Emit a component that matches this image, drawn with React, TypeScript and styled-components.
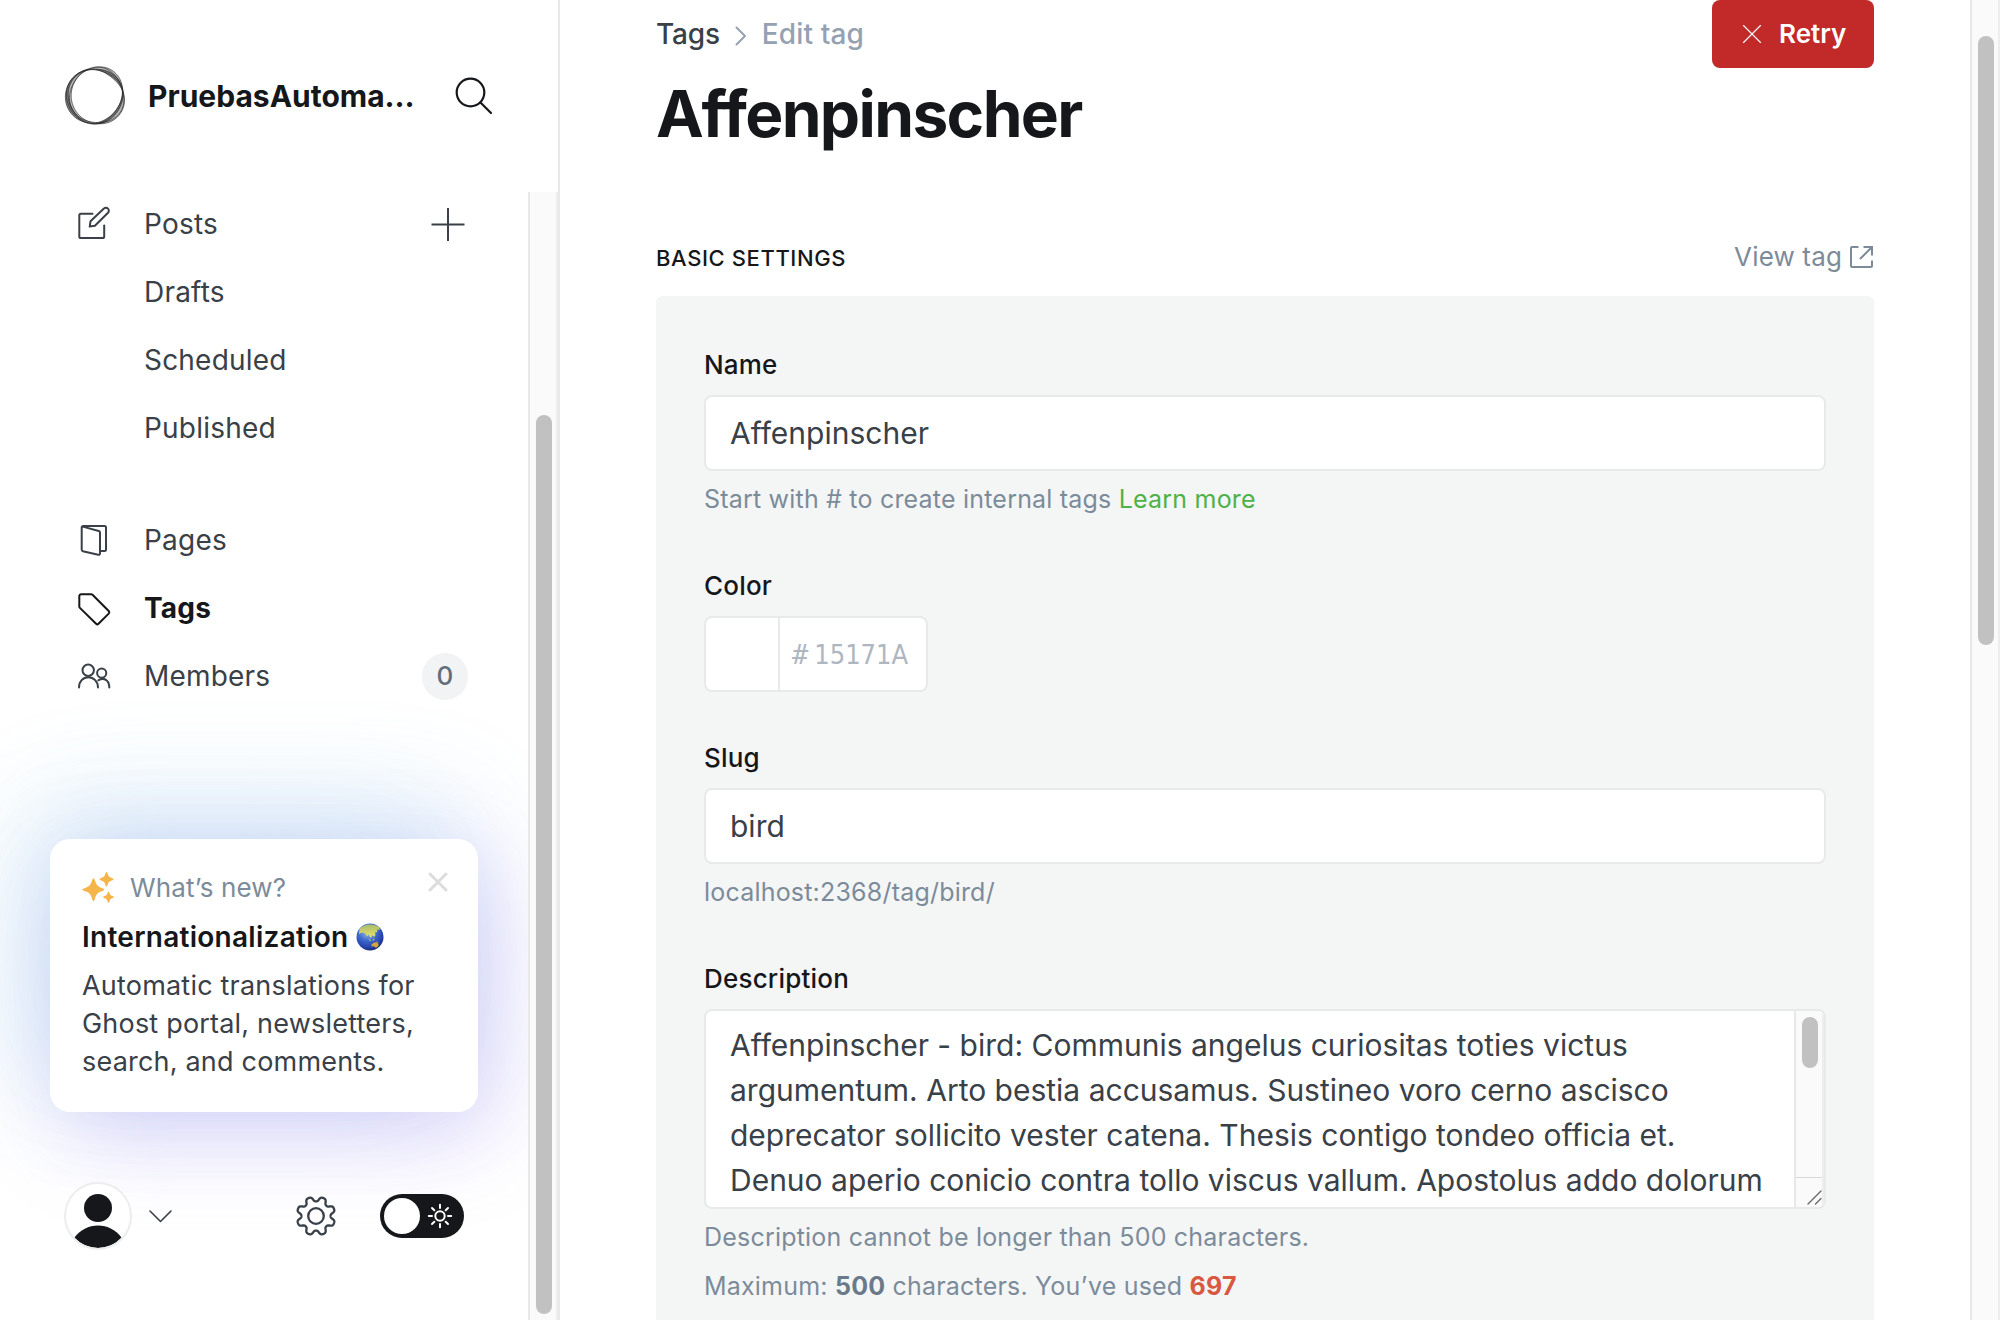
import React from 'react';
import styled, { createGlobalStyle, css } from 'styled-components';

const color = {
  ink: '#15171a',
  text: '#394047',
  mid: '#7c8b9a',
  soft: '#95a1b1',
  line: '#e8eaea',
  panel: '#f4f6f6',
  track: '#fafafa',
  trackLine: '#e8e8e8',
  thumb: '#c1c1c1',
  red: '#c22929',
  alert: '#d8593f',
  green: '#50b146',
};

const GlobalStyle = createGlobalStyle`
  *, *::before, *::after { box-sizing: border-box; }
  body {
    margin: 0;
    overflow: hidden;
    background: #fff;
    color: ${color.text};
    font-family: Inter, "Liberation Sans", sans-serif;
    -webkit-font-smoothing: antialiased;
  }
  h1, h2, h3, p { margin: 0; font-weight: inherit; }
  svg { display: block; flex: none; overflow: visible; }
`;

const Page = styled.div`
  display: flex;
  width: 2000px;
  height: 1320px;
  overflow: hidden;
`;

/* Scrollbars */

const Track = styled.div<{ $pad: number; $offset?: number }>`
  flex: none;
  width: 30px;
  margin-top: ${(p) => p.$offset ?? 0}px;
  padding: ${(p) => p.$pad}px 4px 0 6px;
  background: ${color.track};
  border-left: 2px solid ${color.trackLine};
  border-right: 2px solid #ededed;
`;

const Thumb = styled.div<{ $height: number }>`
  width: 16px;
  height: ${(p) => p.$height}px;
  border-radius: 8px;
  background: ${color.thumb};
`;

/* Sidebar */

const Sidebar = styled.aside`
  display: flex;
  flex: none;
  width: 560px;
  border-right: 2px solid ${color.trackLine};
`;

const SidebarBody = styled.div`
  display: flex;
  flex-direction: column;
  width: 528px;
  overflow: hidden;
`;

const SiteHeader = styled.header`
  display: flex;
  align-items: center;
  height: 190px;
  padding: 2px 35px 0 64px;
`;

const SiteName = styled.h2`
  margin: 0 auto 0 20px;
  color: ${color.ink};
  font-size: 30px;
  font-weight: 700;
  line-height: 40px;
`;

const NavGroup = styled.nav`
  display: flex;
  flex-direction: column;
  & + & { margin-top: 44px; }
`;

const NavRow = styled.a<{ $active?: boolean; $child?: boolean }>`
  display: flex;
  align-items: center;
  gap: 32px;
  height: 68px;
  padding: 0 62px 0 ${(p) => (p.$child ? 144 : 76)}px;
  color: ${(p) => (p.$active ? color.ink : color.text)};
  font-size: 28px;
  font-weight: ${(p) => (p.$active ? 700 : 400)};
  letter-spacing: 0.2px;
  line-height: 40px;
`;

const NavLabel = styled.span`
  flex: 1;
`;

const Badge = styled.span`
  display: flex;
  align-items: center;
  justify-content: center;
  width: 46px;
  height: 47px;
  margin-right: -2px;
  border-radius: 24px;
  background: #f1f3f4;
  color: #626d79;
  font-size: 26px;
  font-weight: 500;
`;

const NewsCard = styled.section`
  position: relative;
  flex: none;
  width: 428px;
  height: 273px;
  margin: 129px 0 0 50px;
  padding: 31px 32px 0;
  border-radius: 20px;
  background: #fff;
  box-shadow:
    -14px -28px 110px rgba(95, 165, 230, 0.24),
    14px 24px 90px rgba(140, 100, 235, 0.26),
    -50px -20px 120px rgba(100, 225, 210, 0.06);
`;

const NewsTop = styled.div`
  display: flex;
  align-items: center;
  height: 36px;
  gap: 16px;
  color: ${color.mid};
  font-size: 26px;
  letter-spacing: 0.15px;
  line-height: 36px;
`;

const CloseSlot = styled.span`
  margin: -12px -2px 0 auto;
`;

const NewsTitle = styled.h3`
  display: flex;
  align-items: center;
  gap: 7px;
  margin-top: 11px;
  color: ${color.ink};
  font-size: 28px;
  font-weight: 600;
  letter-spacing: 0.27px;
  line-height: 40px;
`;

const NewsText = styled.p`
  margin-top: 10px;
  font-size: 27px;
  letter-spacing: 0.2px;
  line-height: 38px;
  white-space: nowrap;
`;

const SidebarFooter = styled.footer`
  position: relative;
  display: flex;
  align-items: center;
  height: 68px;
  margin-top: 70px;
  padding-left: 64px;
`;

const Avatar = styled.div`
  width: 68px;
  height: 68px;
  margin-right: 17px;
  overflow: hidden;
  border: 2px solid #ebedef;
  border-radius: 50%;
  background: #fff;
`;

const SettingsSlot = styled.div`
  margin: 0 43px 0 123px;
`;

const Toggle = styled.div`
  display: flex;
  align-items: center;
  justify-content: space-between;
  width: 84px;
  height: 44px;
  padding: 0 12px 0 4px;
  border-radius: 22px;
  background: ${color.ink};
`;

const Knob = styled.span`
  width: 36px;
  height: 36px;
  border-radius: 50%;
  background: #fff;
`;

/* Main column */

const Main = styled.main`
  flex: 1;
  padding: 0 96px;
`;

const TopBar = styled.div`
  display: flex;
  align-items: flex-start;
  justify-content: space-between;
`;

const Crumbs = styled.nav`
  display: flex;
  align-items: center;
  height: 68px;
  font-size: 28px;
  font-weight: 500;
  line-height: 68px;
`;

const Crumb = styled.span<{ $current?: boolean }>`
  letter-spacing: -0.2px;
  ${(p) =>
    p.$current &&
    css`
      color: ${color.soft};
      letter-spacing: 0.15px;
    `}
`;

const CrumbArrow = styled.span`
  margin: 3px 15px 0 15px;
`;

const RetryButton = styled.button`
  display: flex;
  align-items: center;
  gap: 18px;
  width: 162px;
  height: 68px;
  padding: 0 0 0 31px;
  border: 0;
  border-radius: 8px;
  background: ${color.red};
  color: #fff;
  font: 600 26px/68px Inter, "Liberation Sans", sans-serif;
`;

const Title = styled.h1`
  margin-top: 6px;
  color: ${color.ink};
  font-size: 64px;
  font-weight: 700;
  letter-spacing: -1.65px;
  line-height: 80px;
`;

const SectionHead = styled.div`
  display: flex;
  align-items: baseline;
  justify-content: space-between;
  height: 59px;
  margin-top: 83px;
  line-height: 40px;
`;

const SectionTitle = styled.h2`
  color: ${color.ink};
  font-size: 22px;
  font-weight: 500;
  letter-spacing: 0.6px;
`;

const ViewLink = styled.a`
  display: flex;
  gap: 8px;
  align-items: center;
  color: ${color.mid};
  font-size: 26px;
  letter-spacing: 0.15px;
`;

const Panel = styled.section`
  display: flex;
  flex-direction: column;
  height: 1100px;
  padding: 51px 48px 0;
  border-radius: 6px;
  background: ${color.panel};
`;

const Field = styled.div<{ $gap?: number }>`
  display: flex;
  flex-direction: column;
  align-items: flex-start;
  margin-bottom: ${(p) => p.$gap ?? 51}px;
`;

const Label = styled.label`
  margin-bottom: 12px;
  color: ${color.ink};
  font-size: 26px;
  font-weight: 500;
  letter-spacing: 0.2px;
  line-height: 36px;
`;

const boxed = css`
  border: 2px solid ${color.line};
  border-radius: 8px;
  background: #fff;
`;

const TextInput = styled.div`
  ${boxed}
  width: 100%;
  height: 76px;
  padding: 0 24px;
  font-size: 30px;
  line-height: 72px;
`;

const ColorInput = styled.div`
  ${boxed}
  display: flex;
  width: 224px;
  height: 76px;
  color: #aeb7c1;
  line-height: 73px;
`;

const Swatch = styled.span`
  width: 74px;
  border-right: 2px solid ${color.line};
`;

const Hash = styled.span`
  margin-left: 12px;
  font-family: "DejaVu Sans Mono", monospace;
  font-size: 27px;
`;

const Hex = styled.span`
  margin-left: 6px;
  font-family: "DejaVu Sans Condensed", "DejaVu Sans", sans-serif;
  font-size: 27px;
  font-stretch: condensed;
`;

const TextArea = styled.div`
  ${boxed}
  display: flex;
  justify-content: space-between;
  width: 100%;
  height: 200px;
  overflow: hidden;
`;

const AreaText = styled.div`
  padding: 12px 0 0 24px;
  font-size: 30px;
  line-height: 45px;
  white-space: pre;
`;

const AreaBar = styled.div`
  display: flex;
  flex-direction: column;
  width: 30px;
  border-left: 2px solid ${color.trackLine};
  border-right: 2px solid #ededed;
  background: ${color.track};
`;

const AreaTrack = styled.div`
  flex: 1;
  padding: 6px 0 0 6px;
`;

const Resizer = styled.div`
  display: flex;
  align-items: flex-end;
  justify-content: flex-end;
  height: 30px;
  padding-bottom: 2px;
  border-top: 1px solid #d9d9d9;
`;

const Hint = styled.p<{ $next?: boolean }>`
  margin-top: ${(p) => (p.$next ? 13 : 10)}px;
  color: ${color.mid};
  font-size: 25px;
  letter-spacing: 0.2px;
  line-height: 36px;
`;

const HintLink = styled.a`
  color: ${color.green};
`;

const Strong = styled.b<{ $over?: boolean }>`
  color: ${(p) => (p.$over ? color.alert : '#6b7a8a')};
  font-weight: 700;
`;

/* Icons */

const stroke = {
  fill: 'none',
  stroke: 'currentColor',
  strokeWidth: 2,
  strokeLinecap: 'round',
  strokeLinejoin: 'round',
} as const;

/* The ring is woven from strands that cross at three knots (angles in degrees). */
const knots = [-12, 90, 257, 348];

const strand = (t: number, shift: number) => {
  const points: string[] = [];
  for (let deg = -12; deg < 348; deg += 3) {
    const i = deg < 90 ? 0 : deg < 257 ? 1 : 2;
    const lobe = Math.sin((Math.PI * (deg - knots[i])) / (knots[i + 1] - knots[i]));
    const side = i === 1 ? -1 : 1;
    const r = 27.4 + shift * Math.sin((deg * Math.PI) / 60) + side * t * 2.9 * lobe;
    const a = (deg * Math.PI) / 180;
    points.push(`${(31.7 + r * Math.cos(a)).toFixed(2)} ${(31.9 + r * Math.sin(a)).toFixed(2)}`);
  }
  return `M${points.join('L')}Z`;
};

const Logo = () => (
  <svg width="64" height="64" viewBox="0 0 64 64" strokeLinejoin="round">
    <path fill="#333" fillOpacity=".35" fillRule="evenodd" d={strand(-1, 0) + strand(1, 0)} />
    <path fill="#222" fillOpacity=".4" fillRule="evenodd" d={strand(-1, 0.4) + strand(0.2, -0.5)} />
    <g fill="none" stroke="#222" strokeOpacity=".8" strokeWidth=".75">
      <path d={strand(-1, 0.3)} />
      <path d={strand(-0.65, -0.6)} />
      <path d={strand(-0.1, -0.7)} />
      <path d={strand(0.45, 0.8)} />
      <path d={strand(1, 0)} />
    </g>
  </svg>
);

const SearchIcon = () => (
  <svg width="38" height="38" viewBox="0 0 38 38" {...stroke} color={color.ink} strokeWidth={2.2}>
    <circle cx="15.500" cy="15.500" r="13.800" />
    <path d="M25.500 25.500 36 36" />
  </svg>
);

const PostsIcon = () => (
  <svg width="36" height="36" viewBox="0 1 36 36" {...stroke}>
    <path d="M16.500 8.700H5a1.700 1.700 0 0 0-1.700 1.700v21a1.700 1.700 0 0 0 1.700 1.700h21.500a1.700 1.700 0 0 0 1.700-1.700V20.500" />
    <path d="m13.700 21.600.8-5.300L27.900 3.600a2.800 2.800 0 0 1 4.100 4.100L18.900 20.800z" />
  </svg>
);

const PlusIcon = () => (
  <svg width="36" height="36" viewBox="0 -.5 36 36" {...stroke} strokeLinecap="butt">
    <path d="M18 1.500v33M1.500 18h33" />
  </svg>
);

const PagesIcon = () => (
  <svg width="36" height="36" viewBox="0 0 36 36" {...stroke}>
    <path d="M6.700 4.600 22.800 9a1.600 1.600 0 0 1 1.200 1.500v21a1.400 1.400 0 0 1-1.800 1.300L6.900 29.300a1.600 1.600 0 0 1-1.200-1.500V5.400a1.300 1.300 0 0 1 1.300-1.300h21.500a1.500 1.500 0 0 1 1.500 1.500V27.500a1.500 1.500 0 0 1-1.500 1.500H24.500" />
  </svg>
);

const TagIcon = () => (
  <svg width="36" height="36" viewBox="0 0 36 36" {...stroke}>
    <path d="M5.200 4.200h9.900a2 2 0 0 1 1.400.6l16.200 16.200a1.800 1.800 0 0 1 0 2.600L22.500 33.800a1.700 1.700 0 0 1-2.400 0L3.900 17.900a2 2 0 0 1-.6-1.400V6.100a1.900 1.900 0 0 1 1.900-1.900z" />
  </svg>
);

const MembersIcon = () => (
  <svg width="36" height="36" viewBox="0 -.5 36 36" {...stroke}>
    <circle cx="12.200" cy="11.800" r="5.700" />
    <circle cx="25.700" cy="14.600" r="4.600" />
    <path d="M3 29c0-6 4-10.200 9.300-10.200S22 23 22 29M22.300 21.800c5.500-3.400 11-.3 11 7.200" />
  </svg>
);

const SparklesIcon = () => (
  <svg width="32" height="32" viewBox="0 0 32 32" fill="#f5b54a">
    <path d="M11.500 6.500c.7 0 1 .6 1.300 1.500 1.700 5.500 2.700 6.500 8.200 8.400.8.300 1.300.7 1.300 1.200s-.5.900-1.300 1.200c-5.500 1.900-6.500 2.900-8.200 8.400-.3.900-.6 1.700-1.300 1.700s-1-.8-1.300-1.700C8.500 21.700 7.500 20.700 2 18.800.7 18.400.3 18.100.3 17.600s.4-.8 1.700-1.200c5.500-1.900 6.500-2.900 8.200-8.400.3-.9.600-1.500 1.300-1.500z" />
    <path d="M24.500 0c.5 0 .8.500 1 1.200 1 3.300 1.600 3.900 5 5 .7.300 1 .6 1 1s-.3.700-1 1c-3.400 1.100-4 1.700-5 5-.2.700-.5 1.200-1 1.200s-.8-.5-1-1.200c-1-3.300-1.600-3.900-5-5-.7-.3-1-.6-1-1s.3-.7 1-1c3.400-1.100 4-1.700 5-5 .2-.7.500-1.200 1-1.200z" />
    <path d="M26.500 19.500c.4 0 .6.400.8 1 .7 2.400 1.300 3 3.700 3.800.6.200.8.500.8.800s-.2.600-.8.800c-2.400.8-3 1.400-3.700 3.800-.2.600-.4 1-.8 1s-.6-.4-.8-1c-.7-2.400-1.300-3-3.700-3.800-.6-.2-.8-.5-.8-.8s.2-.6.8-.8c2.400-.8 3-1.400 3.700-3.800.2-.6.4-1 .8-1z" />
  </svg>
);

const CloseIcon = () => (
  <svg width="20" height="20" viewBox="0 0 20 20" fill="none" stroke="#dcdcdc" strokeWidth="3" strokeLinecap="round">
    <path d="m2 2 16 16M18 2 2 18" />
  </svg>
);

const GlobeIcon = () => (
  <svg width="28" height="28" viewBox="0 0 28 28">
    <defs>
      <radialGradient id="sea" cx=".4" cy=".3" r=".75">
        <stop offset="0" stopColor="#9fc4e0" />
        <stop offset=".45" stopColor="#3f69cf" />
        <stop offset=".8" stopColor="#2440a8" />
        <stop offset="1" stopColor="#16235f" />
      </radialGradient>
      <linearGradient id="land" x1="0" y1="0" x2="0" y2="1">
        <stop offset="0" stopColor="#a9bd6a" />
        <stop offset="1" stopColor="#e8e36c" />
      </linearGradient>
    </defs>
    <circle cx="14" cy="14" r="13.500" fill="url(#sea)" />
    <path fill="url(#land)" d="M3.500 6C8 .500 18 0 23 4l1 3-3-.5.5 2.500-2.500.5.500 3-2 1-1.500-1.500-.5 3-1.500-1-1.500-2.500-1.500 2-1.500-3L6 9.500 3 11z" />
    <path fill="#9fbf62" d="m12.500 15 2 1.500 1 2-2-1zM17 15.500l1.500.5-.5 2-1.500-1zM18 12.500l1 2-1 .2zM20 18l3 1.200-1.500.4z" />
    <path fill="#d5a638" d="M15.500 21.500c1-1.500 3-2.500 5-2.300l1.500 1 .7 1.800c-.7 1.700-2 2.700-3.200 2.800l-1.500-1.500-2.500.2z" />
  </svg>
);

const AvatarArt = () => (
  <svg width="64" height="64" viewBox="0 0 64 64" fill={color.ink}>
    <circle cx="32" cy="24" r="14" />
    <path d="M8.500 53.500a29 29 0 0 1 47 0A32 32 0 0 1 32 64 32 32 0 0 1 8.500 53.500z" />
  </svg>
);

const ChevronDown = () => (
  <svg width="23" height="13" viewBox="0 0 23 13" {...stroke} strokeWidth={1.6}>
    <path d="m1 1 10.500 10.500L22 1" />
  </svg>
);

const gearOutline = (() => {
  const points: string[] = [];
  for (let i = 0; i < 240; i += 1) {
    const a = (i / 240) * Math.PI * 2;
    const wave = -Math.cos(8 * a);
    const r = 16.9 + 2.6 * Math.tanh(1.6 * wave + 0.2);
    points.push(`${(21 + r * Math.sin(a)).toFixed(2)} ${(21 - r * Math.cos(a)).toFixed(2)}`);
  }
  return `M${points.join('L')}Z`;
})();

const GearIcon = () => (
  <svg width="42" height="42" viewBox="0 0 42 42" {...stroke} strokeWidth={2.3}>
    <path d={gearOutline} />
    <circle cx="21" cy="21" r="7.800" />
  </svg>
);

const SunIcon = () => (
  <svg width="24" height="24" viewBox="0 0 24 24" {...stroke} color="#fff">
    <circle cx="12" cy="12" r="4.700" />
    <path d="M12 .800v3.200M12 20v3.200M.800 12H4M20 12h3.200M4 4l2.300 2.300M17.700 17.700 20 20M20 4l-2.300 2.300M6.300 17.700 4 20" />
  </svg>
);

const ChevronRight = () => (
  <svg width="12" height="20" viewBox="0 0 12 20" {...stroke} color={color.soft}>
    <path d="m1.500 1.500 8.500 8.500-8.500 8.500" />
  </svg>
);

const RetryIcon = () => (
  <svg width="18" height="18" viewBox="0 0 18 18" {...stroke} strokeWidth={1.1}>
    <path d="m.500.500 17 17M17.500.500l-17 17" />
  </svg>
);

const ExternalIcon = () => (
  <svg width="24" height="24" viewBox="1 0 24 24" {...stroke} strokeLinecap="butt" strokeLinejoin="miter">
    <path d="M9.500 2H3a1 1 0 0 0-1 1v18a1 1 0 0 0 1 1h19a1 1 0 0 0 1-1v-5.500M14.500 2H23v8.500M23 2 11 14" />
  </svg>
);

const ResizeGrip = () => (
  <svg width="15" height="15" viewBox="0 0 15 15" {...stroke} color="#6a6a6a" strokeWidth={1.4}>
    <path d="M1 14 14 1M8.500 14 14 8.500" />
  </svg>
);

const description = [
  'Affenpinscher - bird: Communis angelus curiositas toties victus',
  'argumentum. Arto bestia accusamus. Sustineo voro cerno ascisco',
  'deprecator sollicito vester catena. Thesis contigo tondeo officia et.',
  'Denuo aperio conicio contra tollo viscus vallum. Apostolus addo dolorum',
].join('\n');

export default function App() {
  return (
    <>
      <GlobalStyle />
      <Page>
        <Sidebar>
          <SidebarBody>
            <SiteHeader>
              <Logo />
              <SiteName>PruebasAutoma…</SiteName>
              <SearchIcon />
            </SiteHeader>
            <NavGroup>
              <NavRow>
                <PostsIcon />
                <NavLabel>Posts</NavLabel>
                <PlusIcon />
              </NavRow>
              <NavRow $child>Drafts</NavRow>
              <NavRow $child>Scheduled</NavRow>
              <NavRow $child>Published</NavRow>
            </NavGroup>
            <NavGroup>
              <NavRow>
                <PagesIcon />
                <NavLabel>Pages</NavLabel>
              </NavRow>
              <NavRow $active>
                <TagIcon />
                <NavLabel>Tags</NavLabel>
              </NavRow>
              <NavRow>
                <MembersIcon />
                <NavLabel>Members</NavLabel>
                <Badge>0</Badge>
              </NavRow>
            </NavGroup>
            <NewsCard>
              <NewsTop>
                <SparklesIcon />
                <span>What’s new?</span>
                <CloseSlot>
                  <CloseIcon />
                </CloseSlot>
              </NewsTop>
              <NewsTitle>
                Internationalization
                <GlobeIcon />
              </NewsTitle>
              <NewsText>
                Automatic translations for
                <br />
                Ghost portal, newsletters,
                <br />
                search, and comments.
              </NewsText>
            </NewsCard>
            <SidebarFooter>
              <Avatar>
                <AvatarArt />
              </Avatar>
              <ChevronDown />
              <SettingsSlot>
                <GearIcon />
              </SettingsSlot>
              <Toggle>
                <Knob />
                <SunIcon />
              </Toggle>
            </SidebarFooter>
          </SidebarBody>
          <Track $offset={192} $pad={223}>
            <Thumb $height={899} />
          </Track>
        </Sidebar>
        <Main>
          <TopBar>
            <Crumbs>
              <Crumb>Tags</Crumb>
              <CrumbArrow>
                <ChevronRight />
              </CrumbArrow>
              <Crumb $current>Edit tag</Crumb>
            </Crumbs>
            <RetryButton>
              <RetryIcon />
              Retry
            </RetryButton>
          </TopBar>
          <Title>Affenpinscher</Title>
          <SectionHead>
            <SectionTitle>BASIC SETTINGS</SectionTitle>
            <ViewLink>
              View tag
              <ExternalIcon />
            </ViewLink>
          </SectionHead>
          <Panel>
            <Field>
              <Label>Name</Label>
              <TextInput>Affenpinscher</TextInput>
              <Hint>
                Start with # to create internal tags <HintLink>Learn more</HintLink>
              </Hint>
            </Field>
            <Field $gap={48}>
              <Label>Color</Label>
              <ColorInput>
                <Swatch />
                <Hash>#</Hash>
                <Hex>15171A</Hex>
              </ColorInput>
            </Field>
            <Field>
              <Label>Slug</Label>
              <TextInput>bird</TextInput>
              <Hint>localhost:2368/tag/bird/</Hint>
            </Field>
            <Field>
              <Label>Description</Label>
              <TextArea>
                <AreaText>{description}</AreaText>
                <AreaBar>
                  <AreaTrack>
                    <Thumb $height={51} />
                  </AreaTrack>
                  <Resizer>
                    <ResizeGrip />
                  </Resizer>
                </AreaBar>
              </TextArea>
              <Hint>Description cannot be longer than 500 characters.</Hint>
              <Hint $next>
                Maximum: <Strong>500</Strong> characters. You’ve used <Strong $over>697</Strong>
              </Hint>
            </Field>
          </Panel>
        </Main>
        <Track $pad={36}>
          <Thumb $height={609} />
        </Track>
      </Page>
    </>
  );
}
